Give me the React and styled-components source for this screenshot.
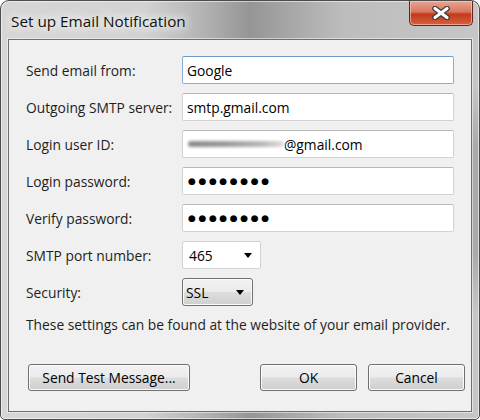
import styled, { createGlobalStyle } from 'styled-components';

const GlobalStyle = createGlobalStyle`
  html, body {
    margin: 0;
    padding: 0;
    background: #ffffff;
  }
  body {
    font-family: "Open Sans", "Noto Sans", "Liberation Sans", sans-serif;
    font-size: 13.8px;
    color: #1e1e1e;
  }
`;

const rows = [
  { label: 'Send email from:', value: 'Google', focused: true },
  { label: 'Outgoing SMTP server:', value: 'smtp.gmail.com' },
  { label: 'Login user ID:', value: '@gmail.com', hidden: true },
  { label: 'Login password:', password: true },
  { label: 'Verify password:', password: true },
];

const App = () => {
  return (
    <>
      <GlobalStyle />
      <Window>
        <TitleBar>
          <Title>Set up Email Notification</Title>
          <CloseButton>
            <svg width="20" height="14" viewBox="0 0 20 14">
              <path d="M4 2.5 L16 11.5 M16 2.5 L4 11.5" stroke="#3a3a3a" strokeWidth="5.5" strokeLinecap="round" />
              <path d="M4 2.5 L16 11.5 M16 2.5 L4 11.5" stroke="#ffffff" strokeWidth="3.2" strokeLinecap="round" />
            </svg>
          </CloseButton>
        </TitleBar>
        <Client>
          <Form>
            {rows.map((r) => (
              <Row key={r.label}>
                <Label>{r.label}</Label>
                <TextBox $focused={r.focused}>
                  {r.password && <Dots>●●●●●●●●</Dots>}
                  {r.hidden && <Smudge />}
                  {r.value}
                </TextBox>
              </Row>
            ))}
            <Row>
              <Label>SMTP port number:</Label>
              <Combo $width={79}>
                465
                <Arrow />
              </Combo>
            </Row>
            <Row>
              <Label>Security:</Label>
              <Combo $width={71} $button>
                SSL
                <Arrow />
              </Combo>
            </Row>
          </Form>
          <Note>These settings can be found at the website of your email provider.</Note>
          <Buttons>
            <Button $width={162}>Send Test Message...</Button>
            <RightButtons>
              <Button $width={97}>OK</Button>
              <Button $width={97}>Cancel</Button>
            </RightButtons>
          </Buttons>
        </Client>
      </Window>
    </>
  );
};

//styles
const Window = styled.div`
  box-sizing: border-box;
  width: 480px;
  height: 420px;
  display: flex;
  flex-direction: column;
  padding: 0 7px 7px;
  border: 1px solid #4c4c4c;
  border-radius: 9px 9px 5px 5px;
  background:
    linear-gradient(180deg, rgba(0,0,0,0) 0%, rgba(0,0,0,0) 20%, rgba(70,70,70,0.22) 35%, rgba(70,70,70,0.22) 60%, rgba(0,0,0,0) 75%) right / 8px 100% no-repeat,
    linear-gradient(90deg, #d6d6d6 0%, #d2d2d2 30%, #b4b4b4 42%, #959595 52%, #a6a6a6 60%, #bdbdbd 72%, #c6c6c6 100%);
  box-shadow: inset 0 0 0 1px rgba(255,255,255,0.55);
`;

const TitleBar = styled.div`
  height: 38px;
  display: flex;
  align-items: flex-start;
  justify-content: space-between;
  padding-left: 3px;
`;

const Title = styled.div`
  margin-top: 10px;
  font-family: "Open Sans", "Noto Sans", sans-serif;
  font-size: 15.3px;
  color: #111;
  text-shadow: 0 0 8px #fff, 0 0 12px #fff, 0 0 16px #fff;
`;

const CloseButton = styled.div`
  box-sizing: border-box;
  width: 64px;
  height: 25px;
  margin-right: -1px;
  display: flex;
  align-items: center;
  justify-content: center;
  border: 1px solid #5a2a22;
  border-top: none;
  border-radius: 0 0 5px 5px;
  background: linear-gradient(#e8a593 0%, #d9775f 45%, #c23a1b 55%, #d5623f 100%);
  box-shadow: inset 0 0 0 1px rgba(255,220,210,0.55);
`;

const Client = styled.div`
  flex: 1;
  display: flex;
  flex-direction: column;
  padding: 16px 17px 0;
  background: #f0f0f0;
  border: 1px solid #6e6e6e;
  box-shadow: 0 0 0 1px rgba(255,255,255,0.5);
`;

const Form = styled.div`
  display: flex;
  flex-direction: column;
  gap: 9px;
`;

const Row = styled.div`
  display: grid;
  grid-template-columns: 156px 1fr;
  align-items: center;
  height: 28px;
`;

const Label = styled.div`
  white-space: nowrap;
`;

const TextBox = styled.div`
  box-sizing: border-box;
  height: 28px;
  display: flex;
  align-items: center;
  padding-left: 4px;
  background: #fff;
  border: 1px solid ${(p) => (p.$focused ? '#86aed6' : '#d2d2d2')};
  border-top-color: ${(p) => (p.$focused ? '#6f9cc9' : '#b8b8b8')};
  border-radius: 2px;
  color: #000;
`;

const Dots = styled.span`
  font-family: "DejaVu Sans", sans-serif;
  font-size: 9px;
  letter-spacing: 2.6px;
  margin-left: 1px;
`;

const Smudge = styled.span`
  width: 96px;
  height: 6px;
  margin-left: 1px;
  border-radius: 3px;
  background: linear-gradient(90deg, #8a8a8a 0%, #9c9c9c 40%, #b5b5b5 75%, #dedede 100%);
  filter: blur(1.6px);
`;

const Combo = styled.div`
  box-sizing: border-box;
  width: ${(p) => p.$width}px;
  height: 28px;
  display: flex;
  align-items: center;
  justify-content: space-between;
  padding: 0 8px 0 ${(p) => (p.$button ? 3 : 6)}px;
  border: 1px solid ${(p) => (p.$button ? '#707070' : '#d2d2d2')};
  border-radius: ${(p) => (p.$button ? 3 : 2)}px;
  background: ${(p) =>
    p.$button
      ? 'linear-gradient(#f2f2f2 0%, #ebebeb 48%, #dddddd 52%, #cfcfcf 100%)'
      : '#fff'};
  box-shadow: ${(p) => (p.$button ? 'inset 0 0 0 1px #fbfbfb' : 'none')};
  color: #000;
`;

const Arrow = styled.span`
  width: 0;
  height: 0;
  border-left: 4px solid transparent;
  border-right: 4px solid transparent;
  border-top: 5px solid #000;
`;

const Note = styled.div`
  margin-top: 10px;
  line-height: 18px;
  white-space: nowrap;
`;

const Buttons = styled.div`
  display: flex;
  justify-content: space-between;
  margin: 30px -11px 0 2px;
`;

const RightButtons = styled.div`
  display: flex;
  gap: 11px;
`;

const Button = styled.div`
  box-sizing: border-box;
  width: ${(p) => p.$width}px;
  height: 27px;
  display: flex;
  align-items: center;
  justify-content: center;
  border: 1px solid #707070;
  border-radius: 3px;
  background: linear-gradient(#f2f2f2 0%, #ebebeb 48%, #dddddd 52%, #cfcfcf 100%);
  box-shadow: inset 0 0 0 1px #fbfbfb;
  color: #000;
`;

export default App;
